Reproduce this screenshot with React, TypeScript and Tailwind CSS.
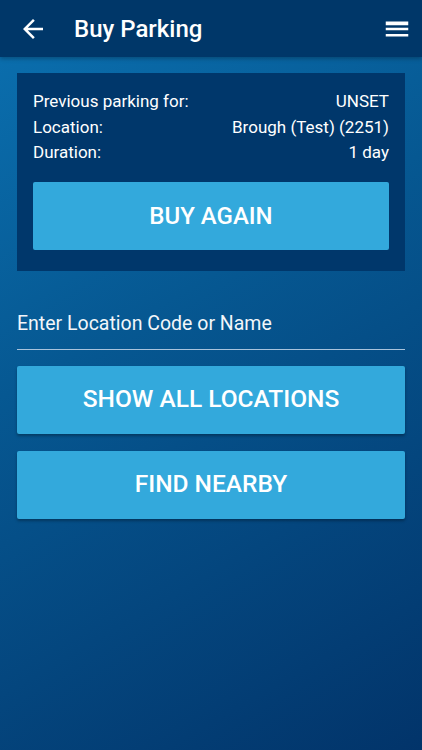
export default function App() {
  const rows = [
    ["Previous parking for:", "UNSET"],
    ["Location:", "Brough (Test) (2251)"],
    ["Duration:", "1 day"],
  ];

  return (
    <div className="w-[422px] h-[750px] flex flex-col overflow-hidden font-['Roboto',sans-serif] text-white bg-[linear-gradient(150deg,#0b71b1_0%,#065892_40%,#02346a_100%)]">
      {/* Toolbar */}
      <div className="h-[57px] shrink-0 flex items-center bg-[#003769] shadow-[0_2px_4px_rgba(0,0,0,0.25)]">
        <svg className="ml-[18px] w-[30px] h-[30px]" viewBox="0 0 24 24" fill="#ffffff">
          <path d="M20 11H7.83l5.59-5.59L12 4l-8 8 8 8 1.41-1.41L7.83 13H20v-2z" />
        </svg>
        <h1 className="ml-[26px] text-[24px] font-medium">Buy Parking</h1>
        <svg className="ml-auto mr-[10px] w-[30px] h-[30px]" viewBox="0 0 24 24" fill="#ffffff">
          <path d="M3 18h18v-2H3v2zm0-5h18v-2H3v2zm0-6v2h18V6H3z" />
        </svg>
      </div>

      <div className="flex flex-col px-[17px] pt-[16px]">
        {/* Previous parking card */}
        <div className="bg-[#00376b] px-[16px] pt-[16px] pb-[21px]">
          <div className="flex flex-col text-[17px] leading-[25.5px]">
            {rows.map(([label, value]) => (
              <div key={label} className="flex justify-between">
                <span>{label}</span>
                <span>{value}</span>
              </div>
            ))}
          </div>
          <button className="mt-[16px] w-full h-[68px] rounded-[2px] bg-[#33a9dc] text-[24px] font-medium">
            BUY AGAIN
          </button>
        </div>

        {/* Location search */}
        <div className="mt-[40px] pb-[12px] border-b border-[#a9c3dc] text-[19.5px] leading-[26px] text-[#f2f6fa]">
          Enter Location Code or Name
        </div>

        <button className="mt-[16px] w-full h-[68px] rounded-[2px] bg-[#33a9dc] text-[24.5px] font-medium shadow-[0_2px_3px_rgba(0,0,0,0.3)]">
          SHOW ALL LOCATIONS
        </button>
        <button className="mt-[17px] w-full h-[68px] rounded-[2px] bg-[#33a9dc] text-[24.5px] font-medium shadow-[0_2px_3px_rgba(0,0,0,0.3)]">
          FIND NEARBY
        </button>
      </div>
    </div>
  );
}
